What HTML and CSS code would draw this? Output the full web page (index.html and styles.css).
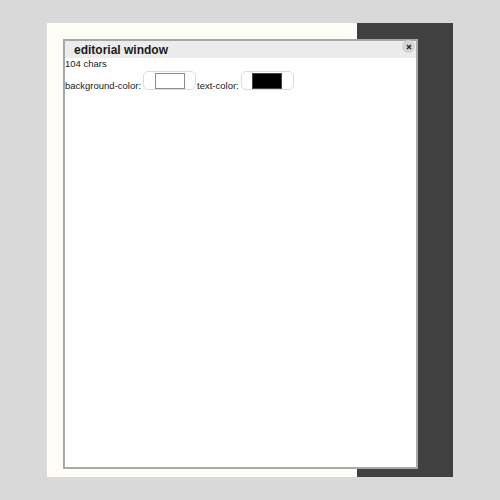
FILE: index.html
```html
<!DOCTYPE html>
<html>
<head>
<meta charset="utf-8">
<link rel="stylesheet" href="styles.css">
</head>
<body>
<div class="screen">
  <div class="page"></div>
  <div class="side"></div>
  <div class="window">
    <div class="titlebar">
      <span class="title">editorial window</span>
      <span class="close"><svg width="6" height="6" viewBox="0 0 6 6"><path d="M1 1L5 5M5 1L1 5" stroke="#1d2440" stroke-width="1.4"/></svg></span>
    </div>
    <div class="count">104 chars</div>
    <div class="row">
      <span class="label">background-color:</span>
      <span class="picker"><span class="swatch white"></span></span>
      <span class="label">text-color:</span>
      <span class="picker"><span class="swatch black"></span></span>
    </div>
  </div>
</div>
</body>
</html>
```
FILE: styles.css
```css
html, body {
  margin: 0;
  padding: 0;
  background: #d9d9d9;
  font-family: "Liberation Sans", Arial, sans-serif;
}
.screen {
  position: relative;
  margin: 23px 0 0 47px;
  width: 406px;
  height: 454px;
  display: flex;
}
.page {
  width: 310px;
  background: #fffdf7;
}
.side {
  flex: 1;
  background: #404040;
}
.window {
  position: absolute;
  left: 16px;
  top: 16px;
  width: 351px;
  height: 426px;
  border: 2px solid #a8a8a8;
  background: #ffffff;
}
.titlebar {
  position: relative;
  height: 17px;
  background: #ececec;
  display: flex;
  align-items: center;
  padding-left: 9px;
}
.title {
  font-weight: bold;
  font-size: 12px;
  color: #1a1a1a;
}
.close {
  position: absolute;
  right: 1px;
  top: -1px;
  width: 13px;
  height: 13px;
  border-radius: 50%;
  background: #d4d4d4;
  display: flex;
  align-items: center;
  justify-content: center;
}
.close svg {
  display: block;
}
.count {
  font-size: 9.5px;
  line-height: 12px;
  color: #1a1a1a;
}
.row {
  display: flex;
  align-items: flex-end;
  margin-top: 1px;
}
.label {
  font-size: 9.5px;
  line-height: 9px;
  color: #1a1a1a;
}
.picker {
  box-sizing: border-box;
  width: 53px;
  height: 19px;
  border: 1px solid #dcdcdc;
  border-radius: 5px;
  background: #ffffff;
  display: flex;
  align-items: center;
  justify-content: center;
  margin: 0 1px 0 2px;
}
.swatch {
  box-sizing: border-box;
  width: 30px;
  height: 16px;
  border: 1px solid #8c8c8c;
}
.swatch.white {
  background: #ffffff;
}
.swatch.black {
  background: #000000;
  border-color: #444;
}
```
